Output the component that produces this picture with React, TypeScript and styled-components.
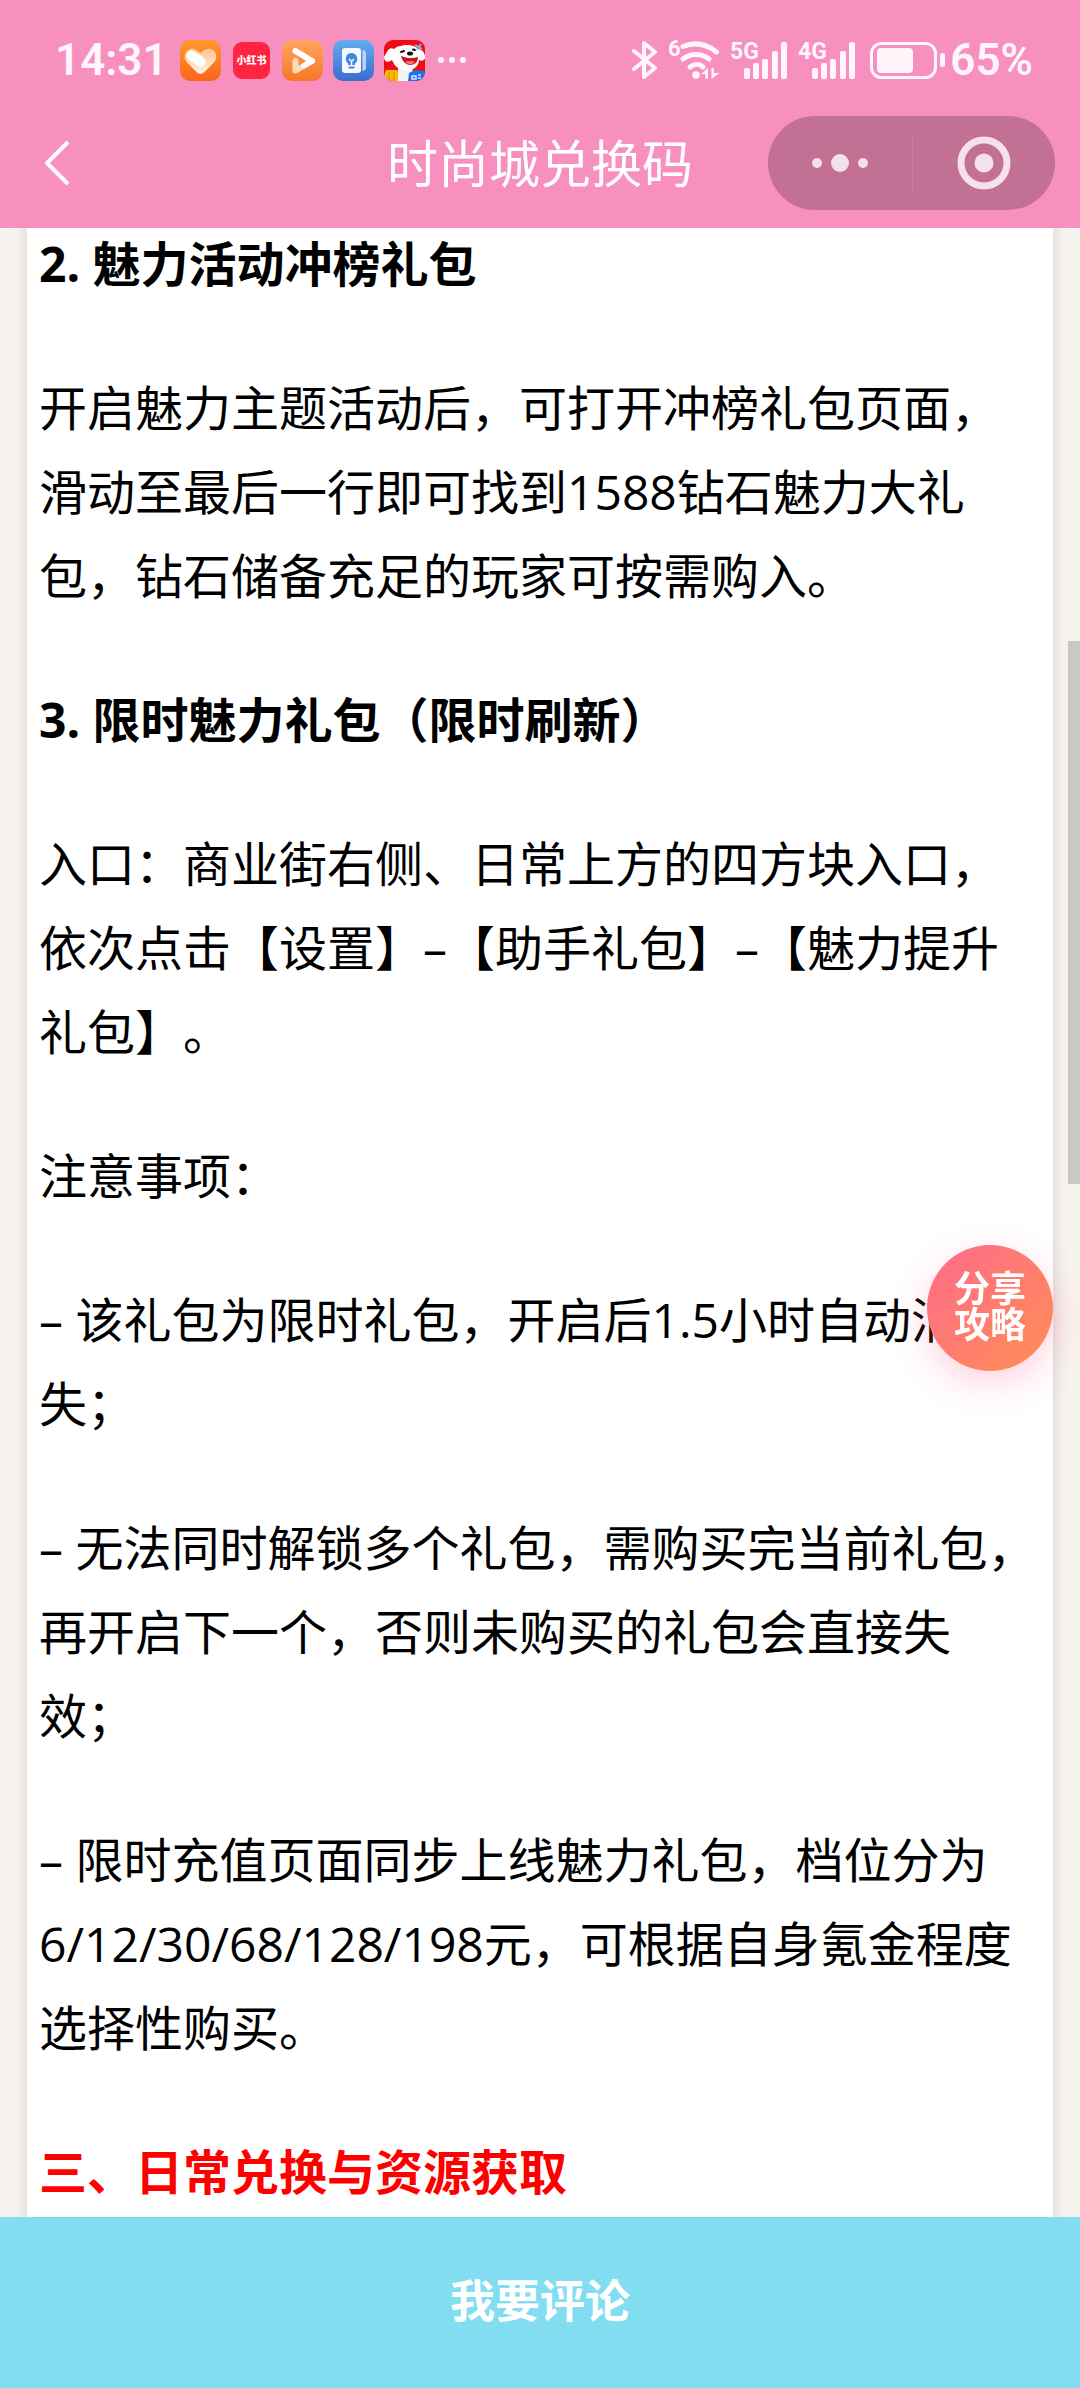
import React from "react";
import styled, { createGlobalStyle } from "styled-components";

const GlobalStyle = createGlobalStyle`
  *, *::before, *::after { box-sizing: border-box; }
  html { scrollbar-width: none; }
  body {
    margin: 0;
    background: #f7f3ee;
    font-family: Roboto, "Noto Sans CJK SC", sans-serif;
    text-spacing-trim: space-all;
  }
`;

const Page = styled.div`
  min-height: 100vh;
  padding: 222px 27px 162px;
`;

const Header = styled.header`
  position: fixed;
  top: 0;
  left: 0;
  right: 0;
  z-index: 3;
  height: 228px;
  background: #f78fbf;
  color: #fff;
`;

const StatusBar = styled.div`
  display: flex;
  align-items: center;
  justify-content: space-between;
  height: 80px;
  margin-top: 20px;
  padding: 0 47px 0 55px;
  color: #fff5fa;
  font-size: 44px;
  font-weight: 600;
  line-height: 48px;
`;

const StatusGroup = styled.div<{ $gap: number }>`
  display: flex;
  align-items: center;
  gap: ${(p) => p.$gap}px;
`;

const Glyph = styled.svg`
  display: block;
  flex: none;
`;

const NavBar = styled.div`
  display: grid;
  grid-template-columns: 1fr auto 1fr;
  align-items: center;
  height: 128px;
  padding: 0 25px 2px;
`;

const IconButton = styled.button`
  display: flex;
  align-items: center;
  justify-content: center;
  padding: 0;
  border: 0;
  background: none;
  color: inherit;
`;

const BackButton = styled(IconButton)`
  width: 64px;
  height: 64px;
`;

const Title = styled.h1`
  margin: 0;
  padding-top: 6px;
  font-size: 51px;
  font-weight: 400;
  line-height: 64px;
`;

const Capsule = styled.div`
  display: grid;
  grid-template-columns: 1fr 1fr;
  align-items: center;
  justify-self: end;
  width: 287px;
  height: 94px;
  border-radius: 47px;
  background: #c37095;
  color: #f5e1ea;
`;

const CapsuleButton = styled(IconButton)`
  height: 58px;

  & + & {
    border-left: 1px solid #cc7fa2;
  }
`;

const Article = styled.main`
  display: flex;
  flex-direction: column;
  gap: 60px;
  padding: 0 12px 12px;
  background: #fff;
  box-shadow: 0 0 15px rgba(0, 0, 0, 0.15);
  color: #000;
  font-family: "Open Sans", "Noto Sans CJK SC", sans-serif;
  font-size: 48px;
  line-height: 84px;
`;

const Paragraph = styled.p`
  margin: 0;
`;

const Heading = styled.h3<{ $accent?: boolean }>`
  margin: 0;
  color: ${(p) => (p.$accent ? "#f00" : "inherit")};
  font-size: 48px;
  font-weight: 700;
`;

const ShareButton = styled.button`
  position: fixed;
  top: 1245px;
  right: 27px;
  z-index: 2;
  width: 126px;
  height: 126px;
  padding: 0 24px;
  border: 0;
  border-radius: 50%;
  background: linear-gradient(135deg, #ff6b8b, #ff8e53);
  box-shadow: 0 12px 36px rgba(255, 107, 139, 0.3);
  color: #fff;
  font-family: inherit;
  font-size: 36px;
  font-weight: 700;
  line-height: 36px;
`;

const ScrollThumb = styled.div`
  position: fixed;
  top: 641px;
  right: 0;
  width: 12px;
  height: 543px;
  background: #cbc7c4;
`;

const CommentButton = styled.button`
  position: fixed;
  right: 0;
  bottom: 0;
  left: 0;
  z-index: 3;
  height: 171px;
  padding: 0;
  border: 0;
  background: #82ddf0;
  color: #fff;
  font-family: inherit;
  font-size: 45px;
  font-weight: 700;
  line-height: 64px;
`;

const HeartAppIcon = () => (
  <Glyph width="41" height="41" viewBox="0 0 41 41">
    <defs>
      <linearGradient id="heartBg" x1="0" y1="0" x2="0" y2="1">
        <stop offset="0" stopColor="#ff9a2e" />
        <stop offset="1" stopColor="#f9661a" />
      </linearGradient>
      <linearGradient id="heartFill" x1="0" y1="0" x2="0" y2="1">
        <stop offset="0" stopColor="#ffc48d" />
        <stop offset="1" stopColor="#fff2e4" />
      </linearGradient>
    </defs>
    <rect width="41" height="41" rx="10" fill="url(#heartBg)" />
    <path
      d="M20.500 34c-1.500 0-3-1-4.500-2.500L7.500 23C3.500 19 4 13 7.500 10.500c4-3 8.500-1.800 13 2.500 4.500-4.300 9-5.500 13-2.500 3.500 2.500 4 8.500 0 12.500L25 31.500C23.500 33 22 34 20.500 34z"
      fill="url(#heartFill)"
    />
    <path d="M11.500 15.500l9 6" stroke="#fff" strokeWidth="10" strokeLinecap="round" />
  </Glyph>
);

const RedNoteAppIcon = () => (
  <Glyph width="41" height="41" viewBox="-2 -2 41 41">
    <rect width="37" height="37" rx="9" fill="#ff2442" />
    <text
      x="18.500"
      y="22"
      textAnchor="middle"
      fontFamily="Noto Sans CJK SC, sans-serif"
      fontSize="10"
      fontWeight="900"
      fill="#fff"
    >
      小红书
    </text>
  </Glyph>
);

const PlayAppIcon = () => (
  <Glyph width="41" height="41" viewBox="0 0 41 41">
    <defs>
      <linearGradient id="playBg" x1="0" y1="0" x2="0" y2="1">
        <stop offset="0" stopColor="#ffa661" />
        <stop offset="1" stopColor="#f87626" />
      </linearGradient>
    </defs>
    <rect width="41" height="41" rx="10" fill="url(#playBg)" />
    <path d="M13.500 21v9.500L30 21" fill="none" stroke="#ffd9b8" strokeWidth="6" strokeLinecap="round" strokeLinejoin="round" />
    <path d="M13.500 11L30 21l-8 4.500" fill="none" stroke="#fff" strokeWidth="6" strokeLinecap="round" strokeLinejoin="round" />
    <path d="M17.500 18.500l5.500 3-5.500 4z" fill="#f98a42" />
  </Glyph>
);

const BulbAppIcon = () => (
  <Glyph width="41" height="41" viewBox="0 0 41 41">
    <defs>
      <linearGradient id="bulbBg" x1="0" y1="0" x2="0" y2="1">
        <stop offset="0" stopColor="#63aef0" />
        <stop offset="1" stopColor="#3a6bd0" />
      </linearGradient>
    </defs>
    <rect width="41" height="41" rx="10" fill="url(#bulbBg)" />
    <path d="M29.500 10c2.500.5 3.500 1.500 3.500 3v15c0 1.500-1 2.500-3.500 3z" fill="#b9d6f7" />
    <rect x="9" y="8" width="19" height="25" rx="3" fill="#f4f9ff" />
    <path d="M18.500 13a5.800 5.800 0 0 0-3.500 10.400V25h7v-1.600A5.800 5.800 0 0 0 18.500 13z" fill="#4487de" />
    <path d="M15.500 27.500h6" stroke="#4487de" strokeWidth="2" />
    <path d="M16 19l2.500 2.500L21 19M18.500 21.500V25" fill="none" stroke="#f4f9ff" strokeWidth="1.400" />
  </Glyph>
);

const DogAppIcon = () => (
  <Glyph width="41" height="41" viewBox="0 0 41 41">
    <defs>
      <clipPath id="dogClip">
        <rect width="41" height="41" rx="9" />
      </clipPath>
    </defs>
    <g clipPath="url(#dogClip)">
      <rect width="41" height="41" fill="#f00a12" />
      <path d="M14 26h14l2 15H13z" fill="#f3f3f5" />
      <path d="M10 9C5 6 3 12 0 17c0 5 4 6 8 3l2 4c3 5 10 7 16 6 5-1 9-5 9-10 3 2 7 0 6-4-1-5-4-7-7-7C31 5 22 4 17 6c-3 0-5 1-7 3z" fill="#fff" />
      <path d="M17 16c5 2 11 3 17 1 0 5-3 8-8 8-4 0-8-4-9-9z" fill="#c81623" />
      <path d="M21 22c3-1.500 7-1.500 10 0-3 3-7 3-10 0z" fill="#ff6e70" />
      <ellipse cx="26" cy="13.500" rx="3" ry="2" fill="#111" />
      <path d="M17 12l3-1M29 9.500l2 .5" stroke="#111" strokeWidth="2" strokeLinecap="round" />
      <path d="M31 5l7 4M37 4l-4 6" stroke="#75b9ee" strokeWidth="2" />
      <path d="M2 26l12 2v3H2z" fill="#e2141c" />
      <rect x="1" y="30" width="13" height="12" rx="2" fill="#ffb800" />
      <path d="M5 32v9M10 32v9" stroke="#e38c00" strokeWidth="1.500" />
      <path d="M25 33l6-3 10 1v11H24z" fill="#1e6ff0" />
      <path d="M28 36h4v3h-4zM34 35h3M34 38h3" fill="none" stroke="#d4e6ff" strokeWidth="1.500" />
    </g>
  </Glyph>
);

const MoreIcon = () => (
  <Glyph width="30" height="8" viewBox="0 0 30 8" fill="currentColor">
    <circle cx="4" cy="4" r="3" />
    <circle cx="15" cy="4" r="3" />
    <circle cx="26" cy="4" r="3" />
  </Glyph>
);

const BluetoothIcon = () => (
  <Glyph width="26" height="40" viewBox="0 0 26 40">
    <path
      d="M2 11l21 17-11 9V3l11 9L2 29"
      fill="none"
      stroke="currentColor"
      strokeWidth="4"
      strokeLinecap="round"
      strokeLinejoin="round"
    />
  </Glyph>
);

const WifiIcon = () => (
  <Glyph width="52" height="52" viewBox="0 -6 52 52">
    <text x="0" y="16" fontFamily="Roboto, sans-serif" fontSize="22" fontWeight="700" fill="currentColor">
      6
    </text>
    <g fill="none" stroke="currentColor" strokeWidth="5" strokeLinecap="round">
      <path d="M15 6.500C26 2 38 3.500 48.500 12" />
      <path d="M15 19c8-6 18-6 26 0" />
      <path d="M22 27c4.500-3.500 9.500-3.500 13 0" />
    </g>
    <circle cx="28" cy="35" r="3.800" fill="currentColor" />
    <path d="M40 28v11h-2.500v-5H33zM43.500 39V28H46v5h5.500z" fill="currentColor" />
  </Glyph>
);

const SignalIcon = ({ label }: { label: string }) => (
  <Glyph width="58" height="52" viewBox="0 -6 58 52" fill="currentColor">
    <text x="0" y="19" fontFamily="Roboto, sans-serif" fontSize="23" fontWeight="700">
      {label}
    </text>
    <rect x="14" y="28" width="6" height="11" rx="2" />
    <rect x="23" y="23" width="6" height="16" rx="2" />
    <rect x="32" y="19" width="6" height="20" rx="2" />
    <rect x="42" y="11" width="6" height="28" rx="2" />
    <rect x="51" y="2" width="6" height="37" rx="2" />
  </Glyph>
);

const BatteryIcon = () => (
  <Glyph width="80" height="40" viewBox="-4 0 80 40">
    <rect x="1.500" y="3.500" width="64" height="34" rx="10" fill="none" stroke="currentColor" strokeWidth="3" />
    <rect x="7" y="8" width="36" height="25" rx="4" fill="currentColor" />
    <rect x="70" y="13" width="5" height="14" rx="2.500" fill="currentColor" />
  </Glyph>
);

const App = () => (
  <>
    <GlobalStyle />
    <Header>
      <StatusBar>
        <StatusGroup $gap={12}>
          <span>14:31</span>
          <StatusGroup $gap={10}>
            <HeartAppIcon />
            <RedNoteAppIcon />
            <PlayAppIcon />
            <BulbAppIcon />
            <DogAppIcon />
          </StatusGroup>
          <MoreIcon />
        </StatusGroup>
        <StatusGroup $gap={4}>
          <StatusGroup $gap={10}>
            <BluetoothIcon />
            <WifiIcon />
            <SignalIcon label="5G" />
            <SignalIcon label="4G" />
            <BatteryIcon />
          </StatusGroup>
          <span>65%</span>
        </StatusGroup>
      </StatusBar>
      <NavBar>
        <BackButton aria-label="返回">
          <Glyph width="28" height="48" viewBox="0 0 28 48">
            <path d="M25 3L4 24l21 21" fill="none" stroke="#fff" strokeWidth="4" strokeLinejoin="round" />
          </Glyph>
        </BackButton>
        <Title>时尚城兑换码</Title>
        <Capsule>
          <CapsuleButton aria-label="更多">
            <Glyph width="58" height="20" viewBox="0 0 58 20" fill="currentColor">
              <circle cx="6" cy="10" r="5" />
              <circle cx="29" cy="10" r="9" />
              <circle cx="52" cy="10" r="5" />
            </Glyph>
          </CapsuleButton>
          <CapsuleButton aria-label="关闭">
            <Glyph width="54" height="54" viewBox="0 0 54 54">
              <circle cx="27" cy="27" r="23" fill="none" stroke="currentColor" strokeWidth="7" />
              <circle cx="27" cy="27" r="9.500" fill="currentColor" />
            </Glyph>
          </CapsuleButton>
        </Capsule>
      </NavBar>
    </Header>
    <Page>
      <Article lang="zh-CN">
        <Heading>2. 魅力活动冲榜礼包</Heading>
        <Paragraph>
          开启魅力主题活动后，可打开冲榜礼包页面，滑动至最后一行即可找到1588钻石魅力大礼包，钻石储备充足的玩家可按需购入。
        </Paragraph>
        <Heading>3. 限时魅力礼包（限时刷新）</Heading>
        <Paragraph>
          入口：商业街右侧、日常上方的四方块入口，依次点击【设置】–【助手礼包】–【魅力提升礼包】。
        </Paragraph>
        <Paragraph>注意事项：</Paragraph>
        <Paragraph>– 该礼包为限时礼包，开启后1.5小时自动消失；</Paragraph>
        <Paragraph>
          – 无法同时解锁多个礼包，需购买完当前礼包，再开启下一个，否则未购买的礼包会直接失效；
        </Paragraph>
        <Paragraph>
          – 限时充值页面同步上线魅力礼包，档位分为6/12/30/68/128/198元，可根据自身氪金程度选择性购买。
        </Paragraph>
        <Heading $accent>三、日常兑换与资源获取</Heading>
      </Article>
    </Page>
    <ScrollThumb />
    <ShareButton>分享攻略</ShareButton>
    <CommentButton>我要评论</CommentButton>
  </>
);

export default App;
